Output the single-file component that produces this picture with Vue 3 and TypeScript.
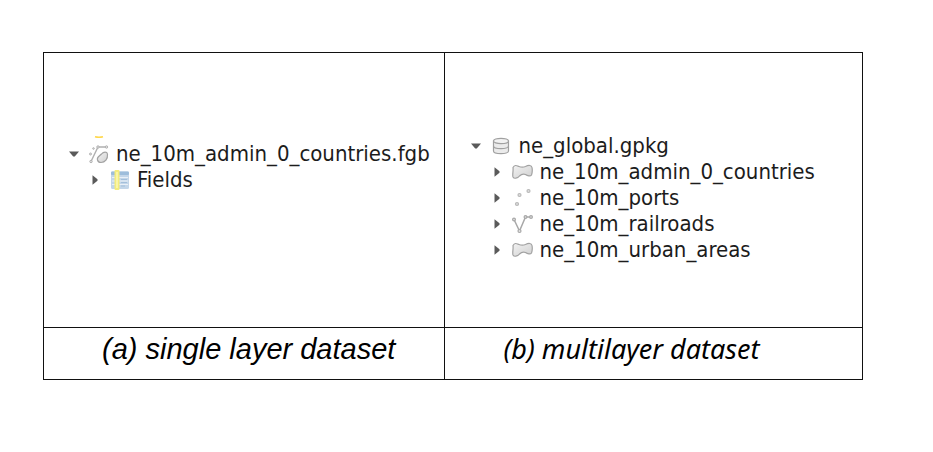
<script setup lang="ts">
import { ref } from 'vue'

type IconName = 'mixed' | 'fields' | 'database' | 'polygon' | 'points' | 'line'

interface LayerNode {
  label: string
  icon: IconName
}

interface Dataset {
  id: string
  root: LayerNode
  children: LayerNode[]
}

const datasets: Dataset[] = [
  {
    id: 'single',
    root: { label: 'ne_10m_admin_0_countries.fgb', icon: 'mixed' },
    children: [{ label: 'Fields', icon: 'fields' }],
  },
  {
    id: 'multi',
    root: { label: 'ne_global.gpkg', icon: 'database' },
    children: [
      { label: 'ne_10m_admin_0_countries', icon: 'polygon' },
      { label: 'ne_10m_ports', icon: 'points' },
      { label: 'ne_10m_railroads', icon: 'line' },
      { label: 'ne_10m_urban_areas', icon: 'polygon' },
    ],
  },
]

const open = ref<Record<string, boolean>>({ single: true, multi: true })

function rows(d: Dataset) {
  const children = open.value[d.id] ? d.children : []
  return [{ ...d.root, child: false }, ...children.map((c) => ({ ...c, child: true }))]
}

function toggle(id: string, child: boolean) {
  if (!child) open.value[id] = !open.value[id]
}
</script>

<template>
  <main class="page">
    <table class="figure">
      <tbody>
        <tr class="trees">
          <td v-for="d in datasets" :key="d.id" :class="d.id">
            <svg v-if="d.id === 'single'" class="sliver" viewBox="0 0 10 3" aria-hidden="true">
              <path d="M1 0.8Q5 1.8 9 0.8" fill="none" stroke="#ffd84d" stroke-width="1.5" />
            </svg>
            <ul class="tree">
              <li v-for="row in rows(d)" :key="row.label" class="row" :class="{ child: row.child }">
                <button
                  class="twisty"
                  type="button"
                  :aria-label="'Toggle ' + row.label"
                  @click="toggle(d.id, row.child)"
                >
                  <svg viewBox="0 0 12 12">
                    <path v-if="!row.child && open[d.id]" d="M1 3.5H11L6.8 8.5H5.200Z" fill="#5a5a5a" />
                    <path v-else d="M3.500 1.200V10.800L8.500 6.800V5.200Z" fill="#5a5a5a" />
                  </svg>
                </button>
                <svg class="icon" viewBox="0 0 22 22" aria-hidden="true">
                  <defs>
                    <linearGradient id="shade" x1="0" y1="0" x2="1" y2="1">
                      <stop offset="0" stop-color="#f2f2f2" />
                      <stop offset="1" stop-color="#d0d0d0" />
                    </linearGradient>
                  </defs>
                  <g v-if="row.icon === 'mixed'" fill="#e6e6e6" stroke="#b0b0b0" stroke-width="1">
                    <path d="M3 18.500L10 4H18" fill="none" stroke-width="1.400" />
                    <path d="M9.500 17C8.500 13.500 11.500 13 13.500 11C15.500 8.500 19 8.500 19.500 11C20 16 17 19.500 13 19.500C11 19.500 10 19 9.500 17Z" fill="url(#shade)" stroke="#a2a2a2" stroke-width="1.200" />
                    <circle cx="3" cy="18.500" r="1.200" />
                    <circle cx="10" cy="4" r="1.200" />
                    <circle cx="18.500" cy="4" r="1.200" />
                    <circle cx="2.500" cy="11" r="1" />
                    <circle cx="5.500" cy="5.500" r="0.800" />
                  </g>
                  <g v-else-if="row.icon === 'fields'">
                    <rect x="2" y="2.500" width="18" height="17.500" rx="1.500" fill="#c3d6e9" />
                    <rect x="2" y="2.500" width="18" height="3.500" rx="1" fill="#9dbddb" />
                    <path d="M3 8.500H19M3 12H19M3 15.500H19" stroke="#e9f0f7" stroke-width="1" />
                    <path d="M12 10.500H18M12 13.500H18M12 17H16" stroke="#a3bfda" stroke-width="1" />
                    <rect x="5.500" y="1" width="5" height="20" rx="1" fill="#f4ec7c" />
                    <path d="M8 3V19" stroke="#fdf8b4" stroke-width="1.500" />
                  </g>
                  <g v-else-if="row.icon === 'database'" stroke="#a0a0a0" stroke-width="1.200">
                    <path d="M3.500 6V16C3.500 19.500 18.500 19.500 18.500 16V6Z" fill="#ebebeb" />
                    <ellipse cx="11" cy="6" rx="7.500" ry="2.600" fill="#f2f2f2" />
                    <path d="M3.500 11C3.500 14.500 18.500 14.500 18.500 11" fill="none" />
                  </g>
                  <path
                    v-else-if="row.icon === 'polygon'"
                    d="M2 6.500C3.500 3.500 5.500 4.500 8 5.500C10.500 6.500 12 6.500 14.500 5.500C17.500 4 20.500 4 21 6.500C21.500 9 21.500 11 20.500 14C19.500 15.500 16.500 15 14.500 13.500C12 12.500 10 13.500 8.500 15C6.500 17.500 3 18 2 16C1.200 13.500 2.500 10 2 6.500Z"
                    fill="url(#shade)"
                    stroke="#a2a2a2"
                    stroke-width="1.200"
                  />
                  <g v-else-if="row.icon === 'points'" fill="#dcdcdc" stroke="#b8b8b8" stroke-width="1.200">
                    <circle cx="17.500" cy="4" r="1.500" />
                    <circle cx="8.500" cy="8" r="1.500" />
                    <circle cx="6" cy="17" r="1.500" />
                  </g>
                  <g v-else fill="#e2e2e2" stroke="#a8a8a8" stroke-width="1.200">
                    <path d="M3 6.500L8.500 18L14.500 4H20" fill="none" stroke-width="1.500" />
                    <circle cx="3" cy="6.500" r="1.400" />
                    <circle cx="8.500" cy="18" r="1.500" />
                    <circle cx="14.500" cy="4" r="1.400" />
                    <circle cx="20" cy="4" r="1.400" />
                  </g>
                </svg>
                <span>{{ row.label }}</span>
              </li>
            </ul>
          </td>
        </tr>
        <tr class="captions">
          <td class="single">(a) single layer dataset</td>
          <td class="multi">(b) multilayer dataset</td>
        </tr>
      </tbody>
    </table>
  </main>
</template>

<style>
body {
  background: #fff;
}
</style>

<style scoped>
.page {
  padding: 52px 70px 52px 43px;
}
.figure {
  width: 100%;
  table-layout: fixed;
  border-collapse: collapse;
  color: #000;
}
td {
  border: 1px solid #111;
  padding: 0;
  vertical-align: top;
}
td.single {
  width: 48.9%;
}
.trees td {
  position: relative;
  height: 274px;
}
.trees .single .tree {
  padding: 88px 0 0 24px;
}
.trees .multi .tree {
  padding: 80px 0 0 25px;
}
.sliver {
  position: absolute;
  top: 83px;
  left: 50px;
  width: 10px;
  height: 3px;
}
.tree {
  margin: 0;
  list-style: none;
  font-family: "DejaVu Sans Condensed", "DejaVu Sans", sans-serif;
  font-size: 22px;
  line-height: 26px;
  color: #1c1c1c;
  white-space: nowrap;
}
.row {
  display: flex;
  align-items: center;
  height: 26px;
}
.row.child {
  padding-left: 21px;
}
.twisty {
  display: flex;
  width: 12px;
  height: 12px;
  margin: 0 8px 0 0;
  padding: 0;
  border: 0;
  background: none;
}
.twisty svg {
  width: 12px;
  height: 12px;
}
.icon {
  width: 22px;
  height: 22px;
  margin-right: 6px;
}
.captions td {
  height: 51px;
  line-height: 42px;
  font-style: italic;
  white-space: nowrap;
}
.captions .single {
  padding-left: 58px;
  font-family: "Liberation Sans", Arial, sans-serif;
  font-size: 29px;
}
.captions .multi {
  padding-left: 58px;
  font-family: "Noto Sans", sans-serif;
  font-size: 27px;
}
</style>
